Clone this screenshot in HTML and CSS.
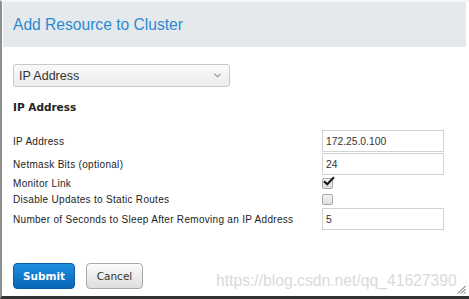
FILE: index.html
```html
<!DOCTYPE html>
<html>
<head>
<meta charset="utf-8">
<link rel="stylesheet" href="styles.css">
</head>
<body>
<div class="dialog">
  <div class="header"><h1 class="title">Add Resource to Cluster</h1></div>
  <div class="content">
    <div class="select">
      <span class="select-text">IP Address</span>
      <svg class="chev" width="7" height="5" viewBox="0 0 7 5"><path d="M0.5 0.8 L3.5 3.8 L6.5 0.8" fill="none" stroke="#8a8a8a" stroke-width="1.1"/></svg>
    </div>
    <h2 class="section">IP Address</h2>
    <div class="form">
      <label class="lbl">IP Address</label>
      <div class="field"><span class="input">172.25.0.100</span></div>
      <label class="lbl">Netmask Bits (optional)</label>
      <div class="field"><span class="input">24</span></div>
      <label class="lbl lbl-cb">Monitor Link</label>
      <div class="field field-cb"><span class="cb"><svg class="tick" width="12" height="10" viewBox="0 0 12 10"><path d="M1 5.2 L4.2 8.3 L11 1.2" fill="none" stroke="#1c1c1c" stroke-width="2.2"/></svg></span></div>
      <label class="lbl lbl-cb">Disable Updates to Static Routes</label>
      <div class="field field-cb"><span class="cb"></span></div>
      <label class="lbl">Number of Seconds to Sleep After Removing an IP Address</label>
      <div class="field"><span class="input">5</span></div>
    </div>
    <div class="actions">
      <button class="btn btn-primary">Submit</button>
      <button class="btn btn-default">Cancel</button>
    </div>
  </div>
  <div class="watermark">https://blog.csdn.net/qq_41627390</div>
  <svg class="grip" width="9" height="9" viewBox="0 0 9 9"><path d="M8.5 1 L1 8.5 M8.5 4 L4 8.5 M8.5 7 L7 8.5" stroke="#555" stroke-width="1"/></svg>
</div>
</body>
</html>
```
FILE: styles.css
```css
html, body {
  margin: 0;
  padding: 0;
  background: #ffffff;
}
.dialog {
  position: relative;
  width: 469px;
  height: 299px;
  box-sizing: border-box;
  border-left: 2px solid #8e8e8e;
  border-bottom: 3px solid #333333;
  border-top: 2px solid #f4f4f4;
  background: #ffffff;
  font-family: "Liberation Sans", Arial, sans-serif;
  overflow: hidden;
}
.header {
  margin: 0 3px 0 1px;
  height: 45px;
  background: #e6e9ec;
  display: flex;
  align-items: center;
  padding-left: 10px;
}
.title {
  margin: 0;
  font-family: "Liberation Sans", Arial, sans-serif;
  font-weight: normal;
  font-size: 15.6px;
  color: #2a8ad2;
}
.content {
  padding: 17px 0 0 11px;
}
.select {
  height: 21px;
  border: 1px solid #c9c9c9;
  border-radius: 3px;
  background: linear-gradient(#fafafa, #ececec);
  display: flex;
  align-items: center;
  justify-content: space-between;
  padding: 0 8px 0 5px;
  width: 202px;
}
.select-text {
  font-size: 12.5px;
  color: #333;
}
.section {
  margin: 14px 0 0 0;
  font-family: "DejaVu Sans", sans-serif;
  font-size: 10.5px;
  font-weight: bold;
  color: #222;
}
.form {
  margin-top: 17px;
  display: grid;
  grid-template-columns: 309px 122px;
  row-gap: 1px;
  align-items: center;
}
.lbl {
  font-size: 10px;
  letter-spacing: 0.3px;
  color: #222;
  white-space: nowrap;
}
.field {
  display: flex;
  align-items: center;
}
.input {
  box-sizing: border-box;
  width: 122px;
  height: 22px;
  border: 1px solid #d2d2d2;
  display: flex;
  align-items: center;
  padding-left: 3px;
  font-size: 10.3px;
  color: #333;
}
.field-cb {
  height: 15px;
}
.cb {
  position: relative;
  box-sizing: border-box;
  width: 11px;
  height: 11px;
  border: 1px solid #a8a8a8;
  border-radius: 2px;
  background: linear-gradient(#f4f4f4, #dedede);
}
.tick {
  position: absolute;
  left: 0;
  top: -3px;
}
.actions {
  margin-top: 33px;
  display: flex;
  gap: 11px;
}
.btn {
  height: 26px;
  border-radius: 4px;
  font-family: "DejaVu Sans", sans-serif;
  font-size: 10.5px;
  padding: 0;
  cursor: pointer;
}
.btn-primary {
  width: 62px;
  border: 1px solid #0c5ea8;
  background: linear-gradient(#1d8fdf, #0764b8);
  color: #ffffff;
  font-weight: bold;
}
.btn-default {
  width: 57px;
  border: 1px solid #a9a9a9;
  background: linear-gradient(#fbfbfb, #dedede);
  color: #333;
}
.watermark {
  position: absolute;
  left: 214px;
  top: 270px;
  font-family: "Liberation Sans", Arial, sans-serif;
  font-size: 15.7px;
  color: #dadada;
  white-space: nowrap;
}
.grip {
  position: absolute;
  right: 3px;
  bottom: 2px;
}
```
